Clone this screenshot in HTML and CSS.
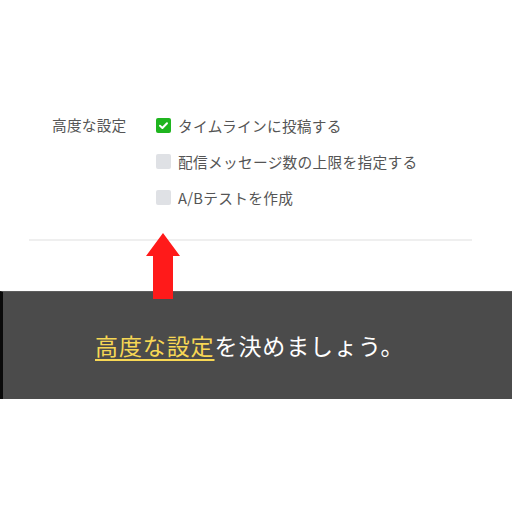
FILE: index.html
```html
<!DOCTYPE html>
<html lang="ja">
<head>
<meta charset="utf-8">
<link rel="stylesheet" href="styles.css">
</head>
<body>
<div class="page">
  <section class="settings">
    <div class="label">高度な設定</div>
    <div class="options">
      <div class="option"><span class="box checked"><svg viewBox="0 0 15 15" width="15" height="15"><path d="M4 7.8 L6.4 10 L11 5.2" fill="none" stroke="#fff" stroke-width="2" stroke-linecap="round" stroke-linejoin="round"/></svg></span><span class="text">タイムラインに投稿する</span></div>
      <div class="option"><span class="box"></span><span class="text">配信メッセージ数の上限を指定する</span></div>
      <div class="option"><span class="box"></span><span class="text">A/Bテストを作成</span></div>
    </div>
  </section>
  <hr class="divider">
  <div class="band">
    <p class="caption"><span class="hl">高度な設定</span>を決めましょう。</p>
  </div>
  <svg class="arrow" viewBox="0 0 34 66" width="34" height="66"><polygon points="17,0 34,23 27,23 27,66 7,66 7,23 0,23" fill="#ff1a1a"/></svg>
</div>
</body>
</html>
```
FILE: styles.css
```css
html, body {
  margin: 0;
  padding: 0;
  background: #fff;
}
body {
  width: 512px;
  height: 512px;
  overflow: hidden;
  font-family: "Noto Sans CJK JP", "Noto Sans", sans-serif;
}
.page {
  position: relative;
  padding-top: 107px;
}
.settings {
  display: flex;
  padding-left: 52px;
}
.label {
  width: 104px;
  font-size: 14.7px;
  line-height: 36px;
  color: #555;
  letter-spacing: 0.2px;
}
.options {
  display: flex;
  flex-direction: column;
}
.option {
  display: flex;
  align-items: center;
  height: 36px;
  gap: 7px;
}
.box {
  width: 15px;
  height: 15px;
  border-radius: 2px;
  background: #dfe1e5;
  display: flex;
}
.box.checked {
  background: #1fb51f;
}
.text {
  font-size: 14.7px;
  color: #555;
  letter-spacing: 0.3px;
}
.divider {
  border: none;
  height: 2px;
  background: #efefef;
  margin: 24px 40px 0 29px;
}
.band {
  margin-top: 50px;
  height: 107px;
  background: #4b4b4b;
  border-left: 3px solid #0a0a0a;
  border-top: 1px solid #5e5e5e;
  display: flex;
  align-items: center;
}
.caption {
  margin: 0;
  padding-left: 92px;
  font-size: 23px;
  letter-spacing: 0.9px;
  color: #fff;
  line-height: 1;
}
.hl {
  color: #f7d754;
  text-decoration: underline;
  text-decoration-thickness: 2px;
  text-underline-offset: 4px;
}
.arrow {
  position: absolute;
  left: 146px;
  top: 233px;
  z-index: 2;
}
```
